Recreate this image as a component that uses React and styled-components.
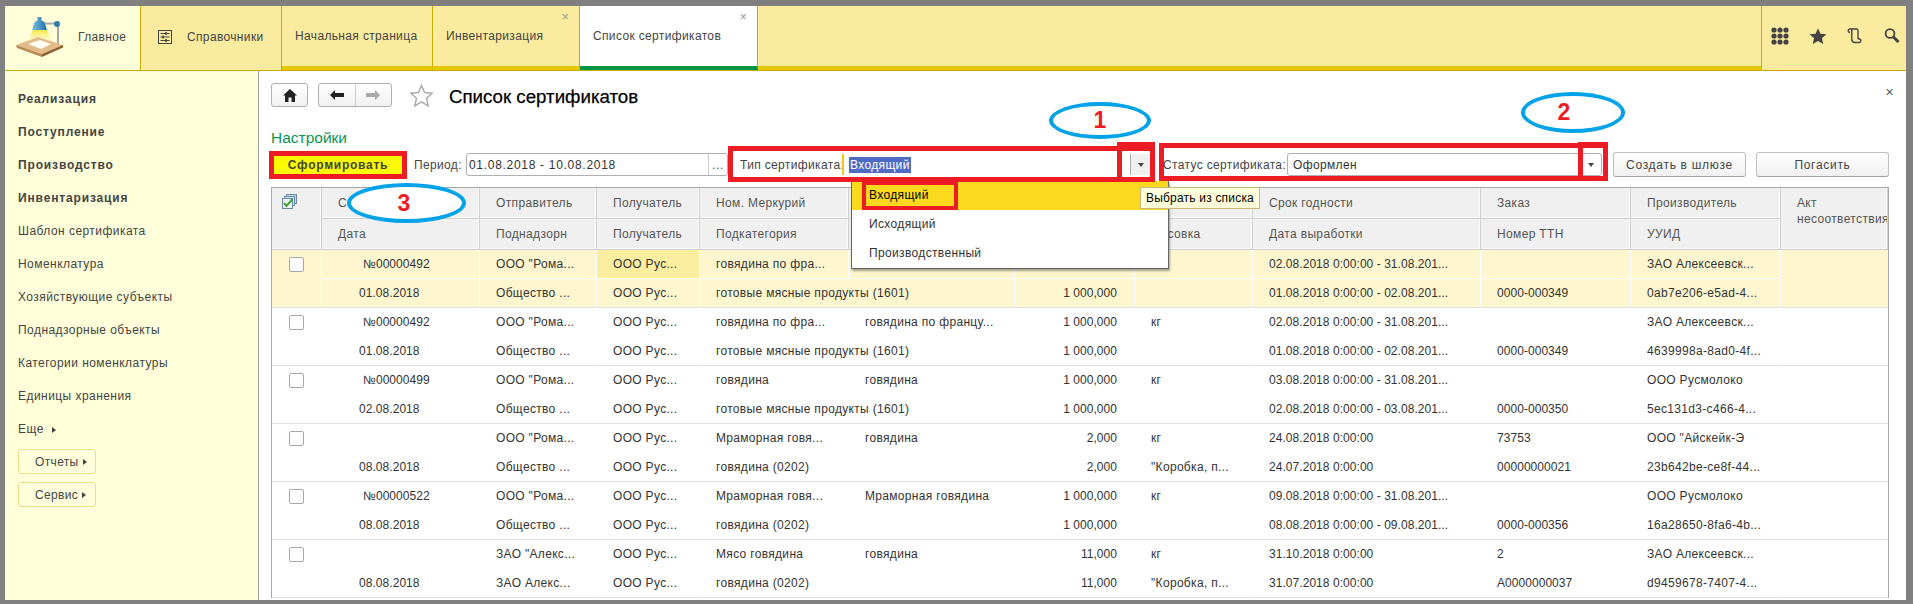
import styled, { createGlobalStyle } from 'styled-components';

const GlobalStyle = createGlobalStyle`
  html, body {
    margin: 0;
    padding: 0;
    background: #808080;
  }
  * {
    box-sizing: border-box;
  }
`;

const Frame = styled.div`
  position: relative;
  width: 1913px;
  height: 604px;
  padding: 6px 7px 4px 5px;
  background: #808080;
  font-family: 'Liberation Sans', Arial, sans-serif;
  font-size: 12px;
  letter-spacing: 0.35px;
  color: #333;
  overflow: hidden;
`;

const TopBar = styled.div`
  display: flex;
  height: 65px;
  background: #fbeb9e;
  border-bottom: 1px solid #c8ac00;
`;

const HomeTab = styled.div`
  display: flex;
  align-items: center;
  gap: 14px;
  width: 136px;
  padding: 0 0 3px 11px;
  background: #ffffd9;
  border-right: 1px solid #c8ac00;
  color: #444;
`;

const SectionTab = styled.div`
  display: flex;
  align-items: center;
  gap: 15px;
  width: 141px;
  padding: 0 0 3px 17px;
  border-right: 1px solid #c8ac00;
  color: #444;
`;

const DocTab = styled.div`
  position: relative;
  display: flex;
  align-items: center;
  width: ${(p) => p.$width}px;
  padding-left: 13px;
  border-right: 1px solid #c8ac00;
  background: ${(p) => (p.$active ? '#fff' : 'transparent')};
  border-bottom: 4px solid ${(p) => (p.$active ? '#009646' : '#e6c800')};
  color: #444;
`;

const TabClose = styled.span`
  position: absolute;
  top: 4px;
  right: 10px;
  color: #999;
  font-size: 12px;
`;

const BarFill = styled.div`
  flex: 1;
  border-bottom: 4px solid #e6c800;
  border-right: 1px solid #c8ac00;
`;

const BarIcons = styled.div`
  display: flex;
  align-items: center;
  gap: 19.5px;
  width: 144px;
  padding: 0 0 5px 9px;
`;

const Body = styled.div`
  display: flex;
  height: 529px;
`;

const Sidebar = styled.div`
  width: 254px;
  padding: 12px 0 0 13px;
  background: #ffffd9;
  border-right: 1px solid #a0a0a0;
`;

const NavItem = styled.div`
  height: 33px;
  line-height: 33px;
  font-weight: ${(p) => (p.$bold ? 'bold' : 'normal')};
  letter-spacing: ${(p) => (p.$bold ? 0.85 : 0.45)}px;
  color: #444;
`;

const SideButtons = styled.div`
  display: flex;
  flex-direction: column;
  gap: 8px;
  padding-top: 3px;
`;

const SideButton = styled.div`
  display: flex;
  align-items: center;
  gap: 4px;
  width: 78px;
  height: 25px;
  padding-left: 16px;
  background: #ffffdc;
  border: 1px solid #eedd88;
  border-radius: 3px;
  color: #444;
`;

const Arrow = styled.span`
  display: inline-block;
  margin-left: ${(p) => p.$gap || 0}px;
  border-left: 4px solid #444;
  border-top: 3px solid transparent;
  border-bottom: 3px solid transparent;
`;

const Content = styled.div`
  position: relative;
  flex: 1;
  padding: 12px 0 0 12px;
  background: #fff;
`;

const TitleRow = styled.div`
  display: flex;
  align-items: center;
  height: 24px;
`;

const NavButton = styled.div`
  display: flex;
  align-items: center;
  justify-content: center;
  height: 24px;
  width: ${(p) => p.$width}px;
  background: linear-gradient(#fff, #f0f0f0);
  border: 1px solid #b0b0b0;
  border-radius: 3px;
  margin-right: 10px;
`;

const NavPart = styled.div`
  display: flex;
  align-items: center;
  justify-content: center;
  flex: 1;
  height: 100%;
  & + & {
    border-left: 1px solid #ccc;
  }
`;

const FormStar = styled.span`
  display: flex;
  margin-left: 8px;
`;

const Title = styled.div`
  margin: 3px 0 0 16px;
  font-size: 18.7px;
  letter-spacing: 0;
  -webkit-text-stroke: 0.25px #000;
  color: #000;
`;

const CloseForm = styled.span`
  position: absolute;
  top: 13px;
  right: 12px;
  color: #555;
  font-size: 14px;
`;

const Settings = styled.div`
  height: 18px;
  margin-top: 22px;
  font-size: 15.5px;
  letter-spacing: 0;
  line-height: 18px;
  color: #0a9550;
`;

const FilterRow = styled.div`
  display: flex;
  align-items: center;
  height: 25px;
  margin-top: 5px;
`;

const GenerateButton = styled.div`
  width: 128px;
  height: 18px;
  margin: 0 12px 0 3px;
  background: linear-gradient(#f6f600, #ffff00);
  font-weight: bold;
  letter-spacing: 0.75px;
  line-height: 18px;
  text-align: center;
  color: #443;
`;

const Label = styled.span`
  margin-left: ${(p) => p.$gap || 0}px;
  color: #444;
  white-space: nowrap;
  width: ${(p) => p.$width}px;
`;

const Field = styled.div`
  display: flex;
  align-items: center;
  justify-content: space-between;
  width: ${(p) => p.$width}px;
  height: 23px;
  padding-left: ${(p) => p.$pad}px;
  border: 1px solid #b0b0b0;
  border-radius: 3px;
  letter-spacing: ${(p) => p.$spacing}px;
  color: #333;
`;

const FieldEnd = styled.span`
  display: flex;
  align-items: center;
  justify-content: center;
  width: ${(p) => p.$width}px;
  height: 100%;
  color: #555;
  border-left: 1px solid ${(p) => p.$line || '#ccc'};
  background: ${(p) => p.$bg || 'transparent'};
`;

const TypeField = styled.div`
  display: flex;
  align-items: center;
  justify-content: space-between;
  width: 308px;
  height: 21px;
  padding-left: 5px;
  border-left: 2px solid #f2c81e;
`;

const Picked = styled.span`
  display: flex;
  align-items: center;
  height: 16px;
  padding: 0 1px;
  background: #4f6cc4;
  color: #fff;
`;

const DownMark = styled.span`
  display: inline-block;
  border-top: 4px solid #444;
  border-left: 3px solid transparent;
  border-right: 3px solid transparent;
`;

const ActionButton = styled.div`
  display: flex;
  align-items: center;
  justify-content: center;
  width: 133px;
  height: 25px;
  margin-left: ${(p) => p.$gap}px;
  background: linear-gradient(#fff, #f0f0f0);
  border: 1px solid #c0c0c0;
  border-bottom-color: #a0a0a0;
  border-radius: 3px;
  letter-spacing: 0.7px;
  color: #444;
`;

const Grid = styled.div`
  display: grid;
  grid-template-columns: 50px 158px 117px 103px 149px 166px 120px 118px 228px 150px 150px 107px;
  width: 1618px;
  margin-top: 10px;
  border-left: 1px solid #a8a8a8;
  border-right: 1px solid #a8a8a8;
  border-top: 1px solid #a8a8a8;
  white-space: nowrap;
`;

const Head = styled.div`
  display: flex;
  align-items: ${(p) => (p.$top ? 'flex-start' : 'center')};
  flex-direction: ${(p) => (p.$top ? 'column' : 'row')};
  grid-column: ${(p) => p.$col || 'auto'};
  grid-row: ${(p) => p.$row || 'auto'};
  height: ${(p) => (p.$tall ? 62 : 31)}px;
  padding: ${(p) => (p.$top ? '7px 0 0 16px' : '0 0 0 16px')};
  background: #f0f0f0;
  border-right: 1px solid #cfcfcf;
  border-bottom: 1px solid #cfcfcf;
  box-shadow: inset -1px -1px 0 #fafafa;
  color: #555;
  line-height: 16px;
  overflow: hidden;
`;

const HeadIcon = styled(Head)`
  justify-content: center;
  align-items: flex-start;
  padding: 6px 14px 0 0;
`;

const Cell = styled.div`
  display: flex;
  align-items: center;
  justify-content: ${(p) => (p.$right ? 'flex-end' : 'flex-start')};
  grid-column: ${(p) => p.$col || 'auto'};
  grid-row: ${(p) => p.$row || 'auto'};
  height: 29px;
  padding: 0 ${(p) => (p.$right ? 17 : 0)}px 0 ${(p) => p.$pad ?? 16}px;
  background: ${(p) => (p.$hot ? '#fcee9f' : p.$sel ? '#fdf6cf' : '#fff')};
  border-right: 1px solid ${(p) => (p.$sel ? '#fff' : 'transparent')};
  border-bottom: 1px solid ${(p) => (p.$last ? '#e0e0e0' : p.$sel ? '#fff' : 'transparent')};
  letter-spacing: ${(p) => (p.$digits ? 0.05 : 0.32)}px;
  color: #333;
  overflow: hidden;
`;

const CheckCell = styled.div`
  grid-row: ${(p) => p.$row};
  grid-column: 1;
  height: 58px;
  padding: 7px 0 0 17px;
  background: ${(p) => (p.$sel ? '#fdf6cf' : '#fff')};
  border-right: 1px solid ${(p) => (p.$sel ? '#fff' : 'transparent')};
  border-bottom: 1px solid #e0e0e0;
`;

const Box = styled.div`
  width: 15px;
  height: 15px;
  background: #fff;
  border: 1px solid #a8a8a8;
  border-radius: 2px;
`;

const ActCell = styled.div`
  grid-row: ${(p) => p.$row};
  grid-column: 12;
  height: 58px;
  background: ${(p) => (p.$sel ? '#fdf6cf' : '#fff')};
  border-bottom: 1px solid #e0e0e0;
`;

const DropList = styled.div`
  position: absolute;
  left: 592px;
  top: 110px;
  width: 318px;
  height: 88px;
  background: #fff;
  border: 1px solid #666;
  border-top: none;
  box-shadow: 1px 2px 2px rgba(0, 0, 0, 0.35);
`;

const DropItem = styled.div`
  height: 29px;
  padding-left: 17px;
  line-height: 29px;
  background: ${(p) => (p.$on ? '#fbd91f' : 'transparent')};
  color: ${(p) => (p.$on ? '#000' : '#333')};
`;

const Tip = styled.div`
  position: absolute;
  left: 881px;
  top: 116px;
  width: 120px;
  height: 22px;
  background: #ffffdc;
  border: 1px solid #c8b878;
  color: #000;
  letter-spacing: 0.2px;
  line-height: 20px;
  text-align: center;
`;

const RedBox = styled.div`
  position: absolute;
  left: ${(p) => p.$x}px;
  top: ${(p) => p.$y}px;
  width: ${(p) => p.$w}px;
  height: ${(p) => p.$h}px;
  border: ${(p) => p.$b || 5}px solid #ed1c24;
`;

const Oval = styled.div`
  position: absolute;
  left: ${(p) => p.$x}px;
  top: ${(p) => p.$y}px;
  width: ${(p) => p.$w}px;
  height: ${(p) => p.$h}px;
  display: flex;
  align-items: center;
  justify-content: center;
  padding-right: ${(p) => p.$shift || 0}px;
  background: #fff;
  border: 4px solid #00a2e8;
  border-radius: 50%;
  color: #ed1c24;
  font-size: 23px;
  font-weight: bold;
  letter-spacing: 0;
`;

const Logo = () => (
  <svg width="48" height="42" viewBox="0 0 48 42">
    <defs>
      <linearGradient id="glow" x1="0" y1="0" x2="0" y2="1">
        <stop offset="0" stopColor="#fbe84a" />
        <stop offset="1" stopColor="#fffde0" />
      </linearGradient>
      <linearGradient id="shade" x1="0" y1="0" x2="1" y2="0">
        <stop offset="0" stopColor="#7cc0e4" />
        <stop offset="1" stopColor="#1f6f9f" />
      </linearGradient>
    </defs>
    <rect x="41" y="8" width="2" height="20" fill="#a8a8a8" />
    <rect x="27" y="6.5" width="15" height="2" fill="#a8a8a8" />
    <circle cx="41" cy="8" r="3" fill="#2a7fa8" />
    <polygon points="17,14 12,25 36,25 31,14" fill="url(#glow)" />
    <polygon points="0,29 22,21 47,29 26,38" fill="#e2bd8a" />
    <polygon points="0,29 26,38 26,41 1,32" fill="#b98a55" />
    <polygon points="26,38 47,29 47,31.5 26,41" fill="#8d5f33" />
    <polygon points="12,28 24,24 35,28 25,33" fill="#fffdf4" />
    <path d="M21.5 1h4v3.5c2 .5 3 1.5 3.5 3l2 6.5H16l2-6.5c.5-1.5 1.5-2.5 3.5-3z" fill="url(#shade)" />
  </svg>
);

const SettingsIcon = () => (
  <svg width="14" height="14" viewBox="0 0 14 14" fill="none" stroke="#444">
    <rect x="0.5" y="0.5" width="13" height="13" />
    <path d="M2.5 3.5h9M2.5 7h9M2.5 10.5h9" />
    <path d="M8 2v3M5 5.5v3M8 9v3" strokeWidth="1.5" />
  </svg>
);

const GridIcon = () => (
  <svg width="18" height="18" viewBox="0 0 18 18" fill="#444">
    {[3, 9, 15].map((y) =>
      [3, 9, 15].map((x) => <circle key={`${x}-${y}`} cx={x} cy={y} r="2.6" />)
    )}
  </svg>
);

const StarIcon = ({ size = 18, solid }) => (
  <svg width={size} height={size} viewBox="0 0 24 24">
    <path
      d="M12 1.5l3.2 7.4 8 .7-6 5.3 1.8 7.9L12 18.6l-7 4.2 1.8-7.9-6-5.3 8-.7z"
      fill={solid ? '#444' : '#fff'}
      stroke={solid ? '#444' : '#aaa'}
      strokeWidth={solid ? 0 : 1.5}
    />
  </svg>
);

const ScrollIcon = () => (
  <svg width="18" height="16" viewBox="0 0 16 16" fill="none" stroke="#444" strokeWidth="1.4">
    <path d="M3 4.5A1.8 1.8 0 1 1 4.8 2.7V11.5C4.8 13.5 6 14.5 8 14.5H12.5A1.8 1.8 0 0 0 12.5 11H11" />
    <path d="M3.5 1H9.5C10.5 1 11 1.5 11 2.5V11" />
  </svg>
);

const SearchIcon = () => (
  <svg width="16" height="15" viewBox="0 0 16 15" fill="none" stroke="#444">
    <circle cx="6" cy="5.5" r="4.4" strokeWidth="1.8" />
    <path d="M9.5 9l5 5" strokeWidth="3" />
  </svg>
);

const HomeIcon = () => (
  <svg width="14" height="13" viewBox="0 0 14 13" fill="#222">
    <path d="M7 0L0 6.5h2V13h3.5V8.5h3V13H12V6.5h2z" />
  </svg>
);

const ArrowIcon = ({ left, color }) => (
  <svg width="14" height="10" viewBox="0 0 14 10" fill={color}>
    <path d={left ? 'M0 5l5-5v3h9v4H5v3z' : 'M14 5L9 0v3H0v4h9v3z'} />
  </svg>
);

const ListIcon = () => (
  <svg width="15" height="15" viewBox="0 0 15 15">
    <rect x="4.5" y="0.5" width="10" height="9" fill="#c8d8e4" stroke="#6a8aa8" />
    <rect x="2.5" y="2.5" width="10" height="9" fill="#d8e4ec" stroke="#6a8aa8" />
    <rect x="0.5" y="4.5" width="10" height="10" fill="#eef3f7" stroke="#6a8aa8" />
    <path d="M2 9l2.5 3 6-7" fill="none" stroke="#3fa535" strokeWidth="2" />
  </svg>
);

// the first row's middle cells are covered by the open list, so they stay empty
const rows = [
  {
    num: '№00000492', date: '01.08.2018', from: 'ООО "Рома...', sub: 'Общество ...', to: 'ООО Рус...',
    name: 'говядина по фра...', merc: '', qty: '', qty2: '1 000,000', unit: '',
    term: '02.08.2018 0:00:00 - 31.08.201...', order: '', maker: 'ЗАО Алексеевск...',
    cat: 'готовые мясные продукты (1601)', pack: '', made: '01.08.2018 0:00:00 - 02.08.201...', ttn: '0000-000349', uuid: '0ab7e206-e5ad-4...',
    sel: true,
  },
  {
    num: '№00000492', date: '01.08.2018', from: 'ООО "Рома...', sub: 'Общество ...', to: 'ООО Рус...',
    name: 'говядина по фра...', merc: 'говядина по францу...', qty: '1 000,000', unit: 'кг',
    term: '02.08.2018 0:00:00 - 31.08.201...', order: '', maker: 'ЗАО Алексеевск...',
    cat: 'готовые мясные продукты (1601)', pack: '', made: '01.08.2018 0:00:00 - 02.08.201...', ttn: '0000-000349', uuid: '4639998a-8ad0-4f...',
  },
  {
    num: '№00000499', date: '02.08.2018', from: 'ООО "Рома...', sub: 'Общество ...', to: 'ООО Рус...',
    name: 'говядина', merc: 'говядина', qty: '1 000,000', unit: 'кг',
    term: '03.08.2018 0:00:00 - 31.08.201...', order: '', maker: 'ООО Русмолоко',
    cat: 'готовые мясные продукты (1601)', pack: '', made: '02.08.2018 0:00:00 - 03.08.201...', ttn: '0000-000350', uuid: '5ec131d3-c466-4...',
  },
  {
    num: '', date: '08.08.2018', from: 'ООО "Рома...', sub: 'Общество ...', to: 'ООО Рус...',
    name: 'Мраморная говя...', merc: 'говядина', qty: '2,000', unit: 'кг',
    term: '24.08.2018 0:00:00', order: '73753', maker: 'ООО "Айскейк-Э',
    cat: 'говядина (0202)', pack: '"Коробка, п...', made: '24.07.2018 0:00:00', ttn: '00000000021', uuid: '23b642be-ce8f-44...',
  },
  {
    num: '№00000522', date: '08.08.2018', from: 'ООО "Рома...', sub: 'Общество ...', to: 'ООО Рус...',
    name: 'Мраморная говя...', merc: 'Мраморная говядина', qty: '1 000,000', unit: 'кг',
    term: '09.08.2018 0:00:00 - 31.08.201...', order: '', maker: 'ООО Русмолоко',
    cat: 'говядина (0202)', pack: '', made: '08.08.2018 0:00:00 - 09.08.201...', ttn: '0000-000356', uuid: '16a28650-8fa6-4b...',
  },
  {
    num: '', date: '08.08.2018', from: 'ЗАО "Алекс...', sub: 'ЗАО Алекс...', to: 'ООО Рус...',
    name: 'Мясо говядина', merc: 'говядина', qty: '11,000', unit: 'кг',
    term: '31.10.2018 0:00:00', order: '2', maker: 'ЗАО Алексеевск...',
    cat: 'говядина (0202)', pack: '"Коробка, п...', made: '31.07.2018 0:00:00', ttn: 'A0000000037', uuid: 'd9459678-7407-4...',
  },
];

const sideLinks = [
  ['Реализация', true],
  ['Поступление', true],
  ['Производство', true],
  ['Инвентаризация', true],
  ['Шаблон сертификата'],
  ['Номенклатура'],
  ['Хозяйствующие субъекты'],
  ['Поднадзорные объекты'],
  ['Категории номенклатуры'],
  ['Единицы хранения'],
];

const headTop = ['С', 'Отправитель', 'Получатель', 'Ном. Меркурий', '', '', '', 'Срок годности', 'Заказ', 'Производитель'];
const headBottom = ['Дата', 'Поднадзорн', 'Получатель', 'Подкатегория', '', '', 'Фасовка', 'Дата выработки', 'Номер ТТН', 'УУИД'];

const App = () => {
  return (
    <Frame>
      <GlobalStyle />
      <TopBar>
        <HomeTab>
          <Logo />
          Главное
        </HomeTab>
        <SectionTab>
          <SettingsIcon />
          Справочники
        </SectionTab>
        <DocTab $width={151}>Начальная страница</DocTab>
        <DocTab $width={147}>
          Инвентаризация
          <TabClose>×</TabClose>
        </DocTab>
        <DocTab $width={178} $active>
          Список сертификатов
          <TabClose>×</TabClose>
        </DocTab>
        <BarFill />
        <BarIcons>
          <GridIcon />
          <StarIcon solid />
          <ScrollIcon />
          <SearchIcon />
        </BarIcons>
      </TopBar>
      <Body>
        <Sidebar>
          {sideLinks.map(([text, bold]) => (
            <NavItem key={text} $bold={bold}>
              {text}
            </NavItem>
          ))}
          <NavItem>
            Еще <Arrow $gap={4} />
          </NavItem>
          <SideButtons>
            <SideButton>
              Отчеты <Arrow />
            </SideButton>
            <SideButton>
              Сервис <Arrow />
            </SideButton>
          </SideButtons>
        </Sidebar>
        <Content>
          <TitleRow>
            <NavButton $width={37}>
              <HomeIcon />
            </NavButton>
            <NavButton $width={74}>
              <NavPart>
                <ArrowIcon left color="#222" />
              </NavPart>
              <NavPart>
                <ArrowIcon color="#aaa" />
              </NavPart>
            </NavButton>
            <FormStar>
              <StarIcon size={23} />
            </FormStar>
            <Title>Список сертификатов</Title>
          </TitleRow>
          <CloseForm>×</CloseForm>
          <Settings>Настройки</Settings>
          <FilterRow>
            <GenerateButton>Сформировать</GenerateButton>
            <Label $width={52}>Период:</Label>
            <Field $width={262} $pad={2} $spacing={0.7}>
              01.08.2018 - 10.08.2018
              <FieldEnd $width={19}>...</FieldEnd>
            </Field>
            <Label $width={102} $gap={12}>
              Тип сертификата:
            </Label>
            <TypeField>
              <Picked>Входящий</Picked>
              <FieldEnd $width={20} $line="#aaa" $bg="#f0f0f0">
                <DownMark />
              </FieldEnd>
            </TypeField>
            <Label $width={124} $gap={13}>
              Статус сертификата:
            </Label>
            <Field $width={315} $pad={5} $spacing={0.35}>
              Оформлен
              <FieldEnd $width={22} $line="transparent">
                <DownMark />
              </FieldEnd>
            </Field>
            <ActionButton $gap={11}>Создать в шлюзе</ActionButton>
            <ActionButton $gap={10}>Погасить</ActionButton>
          </FilterRow>
          <Grid>
            <HeadIcon $row="1 / span 2" $tall>
              <ListIcon />
            </HeadIcon>
            {headTop.map((text, i) => (
              <Head key={`t${i}`} $row="1">
                {text}
              </Head>
            ))}
            <Head $row="1 / span 2" $col="12" $tall $top>
              <span>Акт</span>
              <span>несоответствия</span>
            </Head>
            {headBottom.map((text, i) => (
              <Head key={`b${i}`} $row="2" $col={i + 2}>
                {text}
              </Head>
            ))}
            {rows.map((r, i) => {
              const a = 3 + i * 2;
              const b = a + 1;
              const sel = r.sel;
              return [
                <CheckCell key={`c${i}`} $row={`${a} / span 2`} $sel={sel}>
                  <Box />
                </CheckCell>,
                <Cell key={`num${i}`} $row={a} $col={2} $pad={41} $sel={sel} $digits>{r.num}</Cell>,
                <Cell key={`from${i}`} $row={a} $col={3} $sel={sel}>{r.from}</Cell>,
                <Cell key={`to${i}`} $row={a} $col={4} $sel={sel} $hot={sel}>{r.to}</Cell>,
                <Cell key={`name${i}`} $row={a} $col={5} $sel={sel}>{r.name}</Cell>,
                <Cell key={`merc${i}`} $row={a} $col={6} $sel={sel}>{r.merc}</Cell>,
                <Cell key={`qty${i}`} $row={a} $col={7} $right $sel={sel} $digits>{r.qty}</Cell>,
                <Cell key={`unit${i}`} $row={a} $col={8} $sel={sel}>{r.unit}</Cell>,
                <Cell key={`term${i}`} $row={a} $col={9} $sel={sel} $digits>{r.term}</Cell>,
                <Cell key={`order${i}`} $row={a} $col={10} $sel={sel} $digits>{r.order}</Cell>,
                <Cell key={`maker${i}`} $row={a} $col={11} $sel={sel}>{r.maker}</Cell>,
                <ActCell key={`act${i}`} $row={`${a} / span 2`} $sel={sel} />,
                <Cell key={`date${i}`} $row={b} $col={2} $pad={37} $sel={sel} $last $digits>{r.date}</Cell>,
                <Cell key={`sub${i}`} $row={b} $col={3} $sel={sel} $last>{r.sub}</Cell>,
                <Cell key={`to2${i}`} $row={b} $col={4} $sel={sel} $last>{r.to}</Cell>,
                <Cell key={`cat${i}`} $row={b} $col="5 / span 2" $sel={sel} $last>{r.cat}</Cell>,
                <Cell key={`qty2${i}`} $row={b} $col={7} $right $sel={sel} $last $digits>{r.qty2 ?? r.qty}</Cell>,
                <Cell key={`pack${i}`} $row={b} $col={8} $sel={sel} $last>{r.pack}</Cell>,
                <Cell key={`made${i}`} $row={b} $col={9} $sel={sel} $last $digits>{r.made}</Cell>,
                <Cell key={`ttn${i}`} $row={b} $col={10} $sel={sel} $last $digits>{r.ttn}</Cell>,
                <Cell key={`uuid${i}`} $row={b} $col={11} $sel={sel} $last>{r.uuid}</Cell>,
              ];
            })}
          </Grid>
          <DropList>
            <DropItem $on>Входящий</DropItem>
            <DropItem>Исходящий</DropItem>
            <DropItem>Производственный</DropItem>
          </DropList>
          <Tip>Выбрать из списка</Tip>
        </Content>
      </Body>
      <RedBox $x={269} $y={151} $w={138} $h={28} />
      <RedBox $x={728} $y={146} $w={427} $h={36} />
      <RedBox $x={1117} $y={142} $w={38} $h={40} />
      <RedBox $x={1159} $y={143} $w={449} $h={38} />
      <RedBox $x={1578} $y={142} $w={30} $h={39} />
      <RedBox $x={862} $y={181} $w={96} $h={29} $b={4} />
      <Oval $x={1049} $y={102} $w={102} $h={37}>1</Oval>
      <Oval $x={1521} $y={92} $w={104} $h={41} $shift={18}>2</Oval>
      <Oval $x={347} $y={183} $w={119} $h={40} $shift={5}>3</Oval>
    </Frame>
  );
};

export default App;
